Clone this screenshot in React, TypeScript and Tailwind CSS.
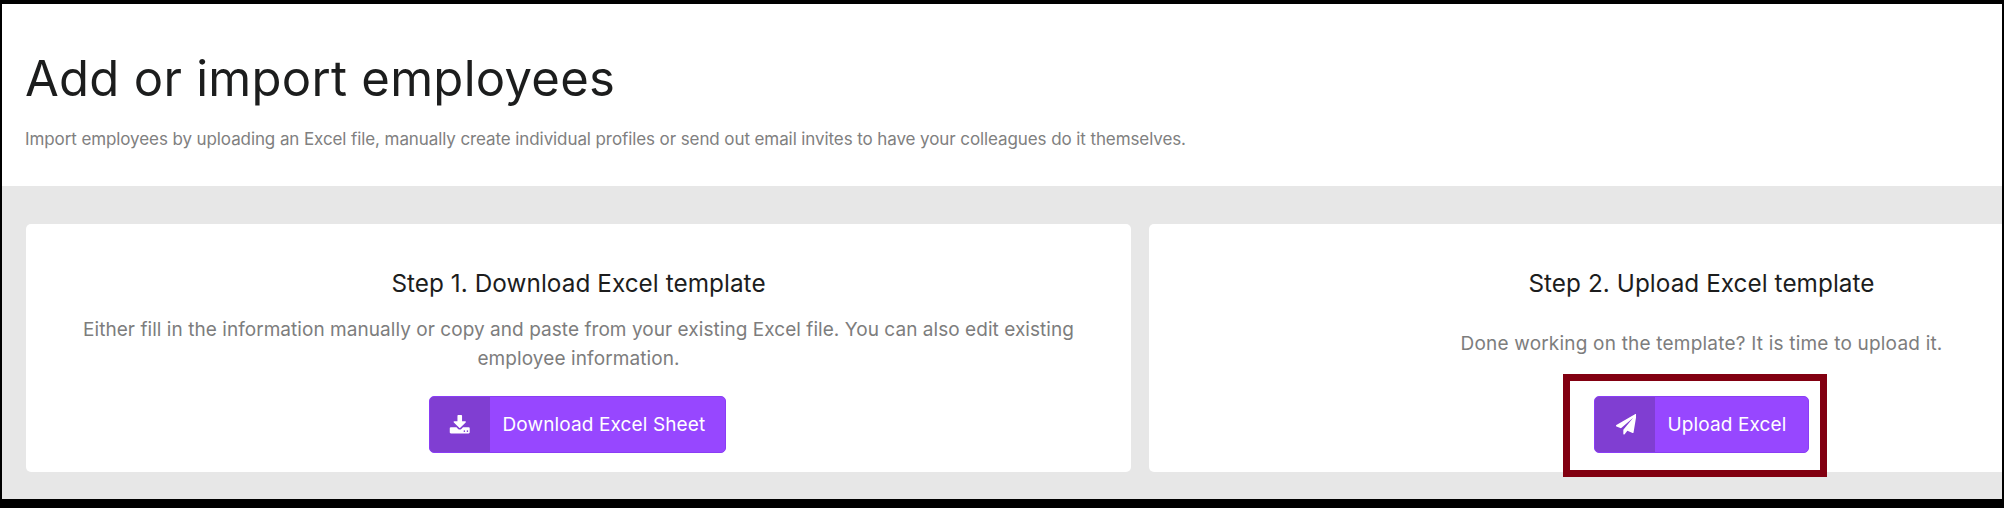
import type { ReactNode } from "react";

function DownloadIcon() {
  return (
    <svg viewBox="0 0 1792 1792" fill="currentColor" className="mt-[2px] size-[21.5px]" aria-hidden="true">
      <path d="M1344 1344q0-26-19-45t-45-19-45 19-19 45 19 45 45 19 45-19 19-45zm256 0q0-26-19-45t-45-19-45 19-19 45 19 45 45 19 45-19 19-45zm128-224v320q0 40-28 68t-68 28H160q-40 0-68-28t-28-68v-320q0-40 28-68t68-28h465l135 136q58 56 136 56t136-56l136-136h464q40 0 68 28t28 68zm-325-569q17 41-14 70l-448 448q-18 19-45 19t-45-19L403 621q-31-29-14-70 17-39 59-39h256V64q0-26 19-45t45-19h256q26 0 45 19t19 45v448h256q42 0 59 39z" />
    </svg>
  );
}

function PaperPlaneIcon() {
  return (
    <svg viewBox="0 0 1792 1792" fill="currentColor" className="ml-[2px] size-[20.5px]" aria-hidden="true">
      <path d="M1764 11q33 24 27 64l-256 1536q-5 29-32 45-14 8-31 8-11 0-24-5l-453-185-242 295q-18 23-49 23-13 0-22-4-19-7-30.500-23.500T640 1728v-349l864-1059-1069 925-395-162q-37-14-40-55-2-40 32-59L1696 9q15-9 32-9 20 0 36 11z" />
    </svg>
  );
}

function StepCard({ title, children, action }: { title: string; children: ReactNode; action: ReactNode }) {
  return (
    <section className="flex h-[248px] w-[1105px] shrink-0 flex-col items-center rounded-[5px] bg-white pt-[44px] text-center">
      <h2 className="text-[24.3px] leading-[30px] tracking-[0.06px] whitespace-nowrap text-[#1c1d1d]">{title}</h2>
      <div className="mt-[16px] flex h-[60px] flex-col justify-center text-[19px] leading-[29.5px] whitespace-nowrap text-[#7d7d7d]">
        {children}
      </div>
      <div className="mt-[22px]">{action}</div>
    </section>
  );
}

function ActionButton({ icon, label, widths }: { icon: ReactNode; label: string; widths: string }) {
  return (
    <button
      className={`flex h-[57px] items-stretch overflow-hidden rounded-[5px] border border-[#8a3df5] bg-[#9747ff] text-white ${widths}`}
    >
      <span className="flex w-[60px] shrink-0 items-center justify-center bg-[#803ed2]">{icon}</span>
      <span className="flex items-center pl-[12.5px] text-[19px] leading-[28px] tracking-[0.12px] whitespace-nowrap">
        {label}
      </span>
    </button>
  );
}

export default function App() {
  return (
    <div className="flex h-[508px] w-[2004px] flex-col overflow-hidden border-t-4 border-r-2 border-b-[9px] border-l-2 border-black bg-[#e7e7e7] font-['Inter',sans-serif]">
      <header className="h-[182px] shrink-0 bg-white pt-[45px] pl-[23px]">
        <h1 className="text-[49px] leading-[60px] tracking-[0.28px] whitespace-nowrap text-[#1c1d1d]">
          Add or import employees
        </h1>
        <p className="mt-[16px] text-[17px] leading-[28px] tracking-[-0.095px] whitespace-nowrap text-[#808080]">
          Import employees by uploading an Excel file, manually create individual profiles or send out email invites to
          have your colleagues do it themselves.
        </p>
      </header>
      <main className="flex gap-[18px] pt-[38px] pl-[24px]">
        <StepCard
          title="Step 1. Download Excel template"
          action={
            <div className="pr-[2px]">
              <ActionButton widths="w-[297px]" icon={<DownloadIcon />} label="Download Excel Sheet" />
            </div>
          }
        >
          <p className="tracking-[0.05px]">
            Either fill in the information manually or copy and paste from your existing Excel file. You can also edit
            existing
            <br />
            <span className="tracking-[0.1px]">employee information.</span>
          </p>
        </StepCard>
        <StepCard
          title="Step 2. Upload Excel template"
          action={
            <div className="relative">
              <ActionButton widths="w-[215px]" icon={<PaperPlaneIcon />} label="Upload Excel" />
              <div className="pointer-events-none absolute -top-[22px] -left-[31px] h-[103px] w-[264px] border-[7px] border-[#820011]" />
            </div>
          }
        >
          <p className="tracking-[0.2px]">Done working on the template? It is time to upload it.</p>
        </StepCard>
      </main>
    </div>
  );
}
